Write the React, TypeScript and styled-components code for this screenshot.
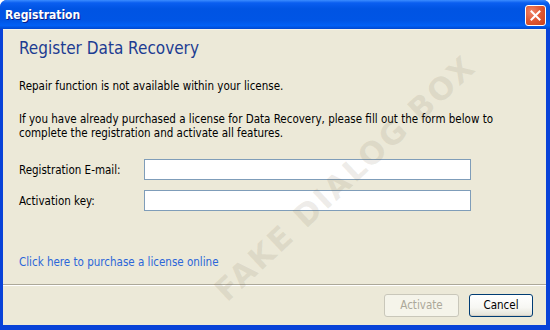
import React, { FC } from "react";
import styled, { createGlobalStyle } from "styled-components";

const GlobalStyle = createGlobalStyle`
    html, body {
        margin: 0;
        padding: 0;
        width: 550px;
        height: 330px;
        overflow: hidden;
    }
    body {
        font-family: Tahoma, "DejaVu Sans Condensed", "DejaVu Sans", sans-serif;
        font-size: 11.5px;
    }
`;

const Window = styled.div`
    position: relative;
    width: 550px;
    height: 330px;
    display: flex;
    flex-direction: column;
    background: #0842d8;
    border-radius: 7px 7px 0 0;
    overflow: hidden;
`;

const TitleBar = styled.div`
    height: 29px;
    flex: none;
    display: flex;
    align-items: center;
    justify-content: space-between;
    padding: 0 4px 0 5px;
    background: linear-gradient(to bottom, #3b8cff 0%, #0a5ef0 10%, #0054e3 30%, #0055e5 70%, #0160f5 88%, #0048d0 100%);
`;

const Title = styled.span`
    color: #fff;
    font-family: Tahoma, "DejaVu Sans Condensed", "DejaVu Sans", sans-serif;
    font-weight: bold;
    font-size: 12px;
    text-shadow: 1px 1px 0 #0a1e8a;
`;

const CloseButton = styled.div`
    width: 19px;
    height: 19px;
    margin-top: 1px;
    border: 1px solid #fff;
    border-radius: 3px;
    background: radial-gradient(circle at 30% 30%, #f0866a 0%, #e05a36 45%, #c8401c 100%);
    display: flex;
    align-items: center;
    justify-content: center;
`;

const Body = styled.div`
    flex: 1;
    margin: 0 4px 5px 3px;
    background: #ece9d8;
    border-top: 1px solid #f5f3ea;
    display: flex;
    flex-direction: column;
`;

const Content = styled.div`
    flex: 1;
    padding: 8px 16px 0 16px;
    display: flex;
    flex-direction: column;
    color: #000;
`;

const Heading = styled.h1`
    margin: 0;
    font-family: Tahoma, "DejaVu Sans Condensed", "DejaVu Sans", sans-serif;
    font-weight: normal;
    font-size: 17px;
    line-height: 20px;
    color: #1c3c92;
`;

const Paragraph = styled.p<{ top: number }>`
    margin: ${props => props.top}px 0 0 0;
    line-height: 14px;
`;

const Form = styled.div`
    margin-top: 19px;
    display: grid;
    grid-template-columns: 125px 327px;
    row-gap: 10px;
    align-items: center;
`;

const Label = styled.label`
    line-height: 14px;
`;

const Input = styled.input`
    box-sizing: border-box;
    height: 21px;
    width: 327px;
    margin: 0;
    border: 1px solid #7f9db9;
    background: #fff;
    font: inherit;
`;

const Link = styled.a`
    margin-top: auto;
    margin-bottom: 15px;
    color: #2b66d9;
    text-decoration: none;
    line-height: 14px;
`;

const Separator = styled.div`
    height: 1px;
    background: #aca899;
    border-bottom: 1px solid #fff;
`;

const Footer = styled.div`
    height: 38px;
    display: flex;
    justify-content: flex-end;
    align-items: center;
    gap: 10px;
    padding: 0 13px 1px 0;
`;

const Button = styled.button<{ wide?: boolean }>`
    box-sizing: border-box;
    height: 23px;
    width: ${props => props.wide ? '75px' : '64px'};
    padding: 0;
    font: inherit;
    border-radius: 3px;
    border: 1px solid #003c74;
    color: #000;
    background: linear-gradient(to bottom, #ffffff 0%, #f7f7f3 60%, #e3e1d6 100%);
    box-shadow: inset 0 -1px 0 #d6d0c5;
    &:disabled {
        border-color: #c9c7ba;
        color: #aca899;
        background: #f5f4ea;
        box-shadow: none;
    }
`;

const Watermark = styled.div`
    position: absolute;
    left: 345px;
    top: 178px;
    transform: translate(-50%, -50%) rotate(-43deg);
    font-family: "DejaVu Sans", sans-serif;
    font-weight: bold;
    font-size: 31px;
    letter-spacing: 2px;
    white-space: nowrap;
    color: rgba(120, 110, 80, 0.13);
    pointer-events: none;
`;

const App: FC = () => {
    return <>
        <GlobalStyle />
        <Window>
            <TitleBar>
                <Title>Registration</Title>
                <CloseButton>
                    <svg width="11" height="11" viewBox="0 0 11 11">
                        <path d="M1.5 1.5 L9.5 9.5 M9.5 1.5 L1.5 9.5" stroke="#fff" strokeWidth="2" strokeLinecap="square" />
                    </svg>
                </CloseButton>
            </TitleBar>
            <Body>
                <Content>
                    <Heading>Register Data Recovery</Heading>
                    <Paragraph top={21}>Repair function is not available within your license.</Paragraph>
                    <Paragraph top={19}>
                        If you have already purchased a license for Data Recovery, please fill out the form below to<br />
                        complete the registration and activate all features.
                    </Paragraph>
                    <Form>
                        <Label>Registration E-mail:</Label>
                        <Input />
                        <Label>Activation key:</Label>
                        <Input />
                    </Form>
                    <Link href="#">Click here to purchase a license online</Link>
                </Content>
                <Separator />
                <Footer>
                    <Button wide disabled>Activate</Button>
                    <Button>Cancel</Button>
                </Footer>
            </Body>
            <Watermark>FAKE DIALOG BOX</Watermark>
        </Window>
    </>;
};

export default App;
